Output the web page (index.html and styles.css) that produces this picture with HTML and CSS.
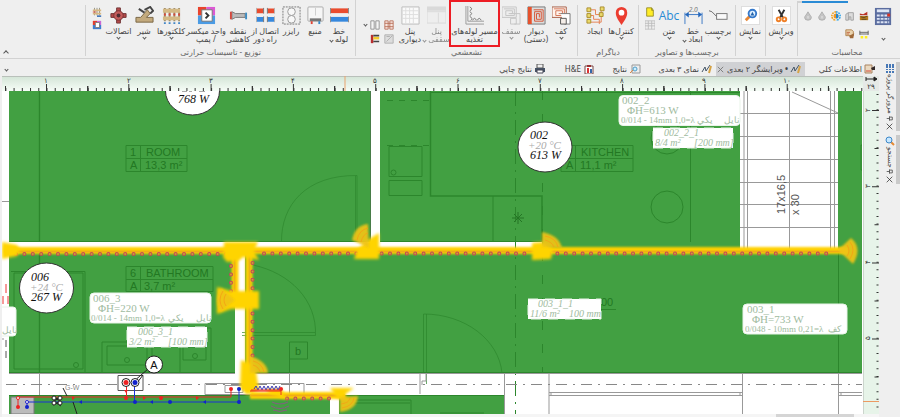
FILE: index.html
```html
<!DOCTYPE html>
<html lang="fa" dir="rtl">
<head>
<meta charset="utf-8">
<title>ویرایشگر ۲ بعدی</title>
<link rel="stylesheet" href="styles.css">
</head>
<body>
<header class="ribbon">
  <section class="group calc">
    <div class="tools">
      <button class="tool w18" aria-label="محاسبات"><svg class="icon" viewBox="0 0 20 20"><rect x="1" y="1" width="17" height="18" fill="#5b6d9f"/><path d="M3 4h13" stroke="#dfe6f5" stroke-width="3"/><path d="M3 9h13M3 12.500h13M3 16h13" stroke="#dbe2f4" stroke-width="2" stroke-dasharray="3 1"/><path d="M14 7h3v3h-3z" fill="#d32"/></svg><i class="caret"></i></button>
      <div class="mini calc-grid">
        <button aria-label="مواد"><svg viewBox="0 0 12 12"><path d="M1 3l4 1 5-3v4H1z" fill="#b93224"/><path d="M1 6h10v5H1z" fill="#b57b1f"/><path d="M2 7l4 1 4-2M3 10h6" stroke="#542" fill="none"/></svg></button>
        <button aria-label="ساختمان"><svg viewBox="0 0 12 12"><path d="M1 4l3-2v9H1zM4 2h6v9H7V7H5v4" fill="#ddd" stroke="#999"/></svg></button>
        <button aria-label="گرمایش"><svg viewBox="0 0 12 12"><path d="M6 1a5 5 0 0 0 0 10" fill="none" stroke="#f0a325" stroke-width="2" stroke-dasharray="2 1"/><path d="M6 1a5 5 0 0 1 0 10" fill="none" stroke="#35a7e8" stroke-width="2" stroke-dasharray="2 1"/><circle cx="6" cy="6" r="3" fill="#ef9821"/><path d="M6 3a3 3 0 0 1 0 6" fill="#2386d1"/></svg></button>
        <button aria-label="آب سرد"><svg viewBox="0 0 12 12"><path d="M6 1C4 5 2 6 2 8a4 3 0 0 0 8 0c0-2-2-3-4-7z" fill="#c4c4c4" stroke="#aaa"/><path d="M6 6v3" stroke="#eee"/></svg></button>
        <button aria-label="آب گرم"><svg viewBox="0 0 12 12"><path d="M6 1C4 5 2 6 2 8a4 3 0 0 0 8 0c0-2-2-3-4-7z" fill="#c4c4c4" stroke="#aaa"/><path d="M6 6v3" stroke="#eee"/></svg></button>
        <button aria-label="اندازه"><svg viewBox="0 0 12 12"><path d="M1 2v5M11 2v5M1 4h10M1 6h10" stroke="#555"/><path d="M2 10h3M7 10h3" stroke="#ffee20" stroke-width="3"/></svg></button>
        <button class="report" aria-label="گزارش"><svg viewBox="0 0 12 12"><path d="M1 1h7l2 2v5H1z" fill="#ead3ae" stroke="#a97841"/><path d="M2 4h4M2 6h3" stroke="#bb5936"/><path d="M5 8l6-3-1 6H6z" fill="#9e6938"/></svg></button>
      </div>
    </div>
    <h2>محاسبات</h2>
  </section>
  <section class="group w32"><div class="tools">
    <button class="tool w30"><svg class="icon" viewBox="0 0 20 20"><rect x=".5" y=".5" width="19" height="19" fill="#fff" stroke="#ddd"/><path d="M7 4l5 9M13 4l-5 9" stroke="#333" stroke-width="2"/><circle cx="7" cy="14" r="2" fill="none" stroke="#ef8028" stroke-width="2"/><circle cx="13" cy="14" r="2" fill="none" stroke="#ef8028" stroke-width="2"/></svg><span>ویرایش</span><i class="caret"></i></button></div></section>
  <section class="group w30"><div class="tools">
    <button class="tool w28"><svg class="icon" viewBox="0 0 20 20"><rect x=".5" y=".5" width="19" height="19" fill="#fff" stroke="#ddd"/><path d="M5 15l5-5" stroke="#e58635" stroke-width="3"/><circle cx="12" cy="8" r="4" fill="#dcefff" stroke="#3478ca" stroke-width="2"/><path d="M10 10l2-4 2 4z" fill="#2262aa"/></svg><span>نمایش</span><i class="caret"></i></button></div></section>
  <section class="group"><div class="tools">
    <button class="tool w26"><svg class="icon" viewBox="0 0 20 20"><path d="M0 5l3 1 5 5" fill="none" stroke="#666"/><rect x="8" y="8" width="11" height="6" fill="#f9f9f9" stroke="#777"/></svg><span>برچسب</span><i class="caret"></i></button>
    <button class="tool w24"><svg class="icon" viewBox="0 0 20 20"><path d="M1 7v12M19 7v12M2 9h16" stroke="#3b78c5"/><path d="M1 9l4-3v6zM19 9l-4-3v6z" fill="#2467bc"/><text x="5" y="6" font-size="7" font-style="italic" fill="#777">2.0</text></svg><span>خط<br>ابعاد <i class="caret"></i></span></button>
    <button class="tool w24"><b class="abc">Abc</b><span>متن</span><i class="caret"></i></button>
    <div class="mini stack"><button aria-label="یادداشت"><svg viewBox="0 0 12 12"><path d="M2 1h6l2 3v7H2z" fill="#ffec27" stroke="#8e8622"/><path d="M8 1v3h2" fill="none" stroke="#8e8622"/></svg></button><button aria-label="جدول"><svg viewBox="0 0 12 12"><path d="M0 1h12v10H0zM0 4h12M0 7h12M4 1v10M8 1v10" fill="#eee" stroke="#bbb"/></svg></button></div>
  </div><h2>برچسب‌ها و تصاویر</h2></section>
  <section class="group"><div class="tools">
    <button class="tool w26"><svg class="icon" viewBox="0 0 20 20"><path d="M10 20C6 14 4 11 4 7a6 6 0 0 1 12 0c0 4-2 7-6 13z" fill="#eb3d30"/><circle cx="10" cy="7" r="3" fill="#fff"/></svg><span>کنترل‌ها</span><i class="caret"></i></button>
    <button class="tool w26"><svg class="icon" viewBox="0 0 20 20"><path d="M5 4h5v5h7M5 10h3v4h6v5M5 17h11V5" fill="none" stroke="#e58152"/><path d="M1 2h4v4H1zM1 8h4v4H1zM1 14h4v4H1zM15 1h4v4h-4zM14 7h4v4h-4z" fill="#ead96a" stroke="#aa8d2b"/></svg><span>ایجاد</span></button>
  </div><h2>دیاگرام</h2></section>
  <section class="group"><div class="tools">
    <button class="tool w24"><svg class="icon" viewBox="0 0 20 20"><path d="M0 1h15v11H0z" fill="#fff5ef" stroke="#a75d45"/><path d="M2 3h11v7H4V5h7v3H7" fill="none" stroke="#d57555"/><path d="M9 8h10v11h-6" fill="#fff" stroke="#777"/><path d="M9 13h6v6H9z" fill="#f5eee8" stroke="#555"/></svg><span>کف</span><i class="caret"></i></button>
    <button class="tool w26"><svg class="icon" viewBox="0 0 20 20"><path d="M1 1h18v18H1z" fill="#ddd" stroke="#777"/><path d="M1 1h4v18H1z" fill="#e7522d"/><path d="M7 4h10v12H8V6h7v8h-5V8h3v4" fill="none" stroke="#d65334"/></svg><span>دیوار<br>(دستی)</span></button>
    <button class="tool off w24"><svg class="icon" viewBox="0 0 20 20"><path d="M0 1h15v11H0zM2 3h11v7H4V5h7v3H7M9 8h10v11h-6M9 13h6v6H9z" fill="#eee" stroke="#aaa"/></svg><span>سقف</span><i class="caret"></i></button>
    <button class="tool pick w49"><svg class="icon" viewBox="0 0 20 20"><path d="M1 0v19h19M3 0v16h17" fill="none" stroke="#999"/><path d="M5 1q4 2 0 4M5 6q4 2 0 4M5 11q4 2 1 4M8 15q2-4 4 0M13 15q2-4 4 0" fill="none" stroke="#777"/></svg><span>مسیر لوله‌های<br>تغذیه</span></button>
    <button class="tool off w27"><svg class="icon" viewBox="0 0 20 20"><path d="M0 1h20v17H0zM0 6h20M12 7v11" fill="#eee" stroke="#ccc"/><path d="M0 1h20v4H0z" fill="#ccc"/></svg><span>پنل<br>سقفی <i class="caret"></i></span></button>
    <button class="tool w26"><svg class="icon" viewBox="0 0 20 20"><path d="M1 1h18v18H1z" fill="#fafafa" stroke="#bbb"/><path d="M1 5h18M1 9h18M1 13h18M5 1v18M9 1v18M13 1v18" stroke="#ddd"/></svg><span>پنل<br>دیواری</span></button>
    <div class="mini quad"><button aria-label="پنل گرم"><svg viewBox="0 0 12 12"><path d="M1 1h4v10H1zM7 1h4v10H7zM1 4h10M1 8h10" fill="#f7e5de" stroke="#b66950"/></svg></button><button aria-label="پنل خالی"><svg viewBox="0 0 12 12"><path d="M1 1h4v10H1zM7 1h4v10H7z" fill="#f5f5f5" stroke="#888"/></svg></button><button aria-label="ویرایش پنل"><svg viewBox="0 0 12 12"><path d="M1 1h10v10H1zM3 9l7-7M3 3h4" fill="#ddd" stroke="#aaa"/></svg></button><button aria-label="لایه‌ها"><svg viewBox="0 0 12 12"><path d="M1 1h3v10H1z" fill="#b92e2e"/><path d="M4 2h7M4 9h7" stroke="#444" stroke-width="2"/><path d="M4 5h7" stroke="#f3cb2c" stroke-width="3"/></svg></button></div><i class="caret far"></i>
  </div><h2>تشعشعي</h2></section>
  <section class="group"><div class="tools">
    <button class="tool w24"><svg class="icon" viewBox="0 0 20 20"><path d="M1 5h18" stroke="#e94c2e" stroke-width="5"/><path d="M1 14h18" stroke="#3688dd" stroke-width="5"/><path d="M0 2v6M20 2v6M0 11v6M20 11v6" stroke="#888" stroke-width="2"/></svg><span>خط<br>لوله <i class="caret"></i></span></button>
    <button class="tool w24"><svg class="icon" viewBox="0 0 20 20"><rect x="2" y="1" width="16" height="15" rx="1" fill="#f6f6f6" stroke="#aaa"/><path d="M4 13h12v3H4z" fill="#777"/><path d="M10 2v8" stroke="#ccc"/><path d="M6 16v3" stroke="#df4333" stroke-width="2"/><path d="M14 16v3" stroke="#338ac8" stroke-width="2"/></svg><span>منبع</span></button>
    <button class="tool w24"><svg class="icon" viewBox="0 0 20 20"><path d="M1 1h18v18H1z" fill="none" stroke="#777" stroke-dasharray="2 1"/><circle cx="10" cy="6" r="4" fill="#f8f8f8" stroke="#999"/><circle cx="10" cy="14" r="4" fill="#f8f8f8" stroke="#999"/></svg><span>رایزر</span></button>
    <button class="tool w28"><svg class="icon" viewBox="0 0 20 20"><path d="M1 5h7M12 5h7" stroke="#e94c2e" stroke-width="5"/><path d="M1 14h7M12 14h7" stroke="#3688dd" stroke-width="5"/><path d="M0 2v6M8 2v6M12 2v6M20 2v6M0 11v6M8 11v6M12 11v6M20 11v6" stroke="#777"/></svg><span>اتصال از<br>راه دور</span></button>
    <button class="tool w26"><svg class="icon" viewBox="0 0 20 20"><path d="M3 6l4 2h10v4H7l-4 2z" fill="#bbb" stroke="#777"/><path d="M1 6h2v8H1z" fill="#d4493e"/><path d="M17 7h2v7h-2z" fill="#3e8cc1"/></svg><span>نقطه<br>کاهشی</span></button>
    <button class="tool w38"><svg class="icon" viewBox="0 0 20 20"><path d="M1 1h9v9H1z" fill="#e9432c"/><path d="M10 1h9v9h-9z" fill="#db5ad4"/><path d="M1 10h18v9H1z" fill="#4b9be4"/><path d="M5 4h11v12H5z" fill="#fff" stroke="#777"/><path d="M9 7l3 3-3 3" fill="none" stroke="#333" stroke-width="2"/></svg><span>واحد میکسر<br>/ پمپ</span></button>
    <button class="tool w32"><svg class="icon" viewBox="0 0 20 20"><path d="M3 2v14M8 2v14M13 2v14M18 2v14" stroke="#998866" stroke-width="2"/><path d="M1 5h18M1 13h18" stroke="#d4b985" stroke-width="4"/><path d="M2 9h17" stroke="#da4637" stroke-width="2" stroke-dasharray="2 3"/><path d="M2 18h17" stroke="#4386c6" stroke-width="2" stroke-dasharray="2 3"/></svg><span>کلکتورها</span><i class="caret"></i></button>
    <button class="tool w22"><svg class="icon" viewBox="0 0 20 20"><path d="M1 12h5l7-8 3 4-4 4h7v5H1z" fill="#c3aa7d" stroke="#796644"/><path d="M10 4l6-3 3 4-3 3M4 3l6 4" fill="none" stroke="#444" stroke-width="2"/></svg><span>شیر</span><i class="caret"></i></button>
    <button class="tool w29"><svg class="icon" viewBox="0 0 20 20"><path d="M8 2h4v16H8zM2 8h16v4H2z" fill="#b54848" stroke="#713738"/><circle cx="10" cy="10" r="5" fill="#c35b5b" stroke="#733"/><circle cx="10" cy="10" r="2" fill="#502c32"/></svg><span>اتصالات</span><i class="caret"></i></button>
    <div class="mini stack"><button aria-label="کلکتور"><svg viewBox="0 0 12 12"><path d="M3 1v9M6 1v9M9 1v9" stroke="#887"/><path d="M1 4h10M1 8h10" stroke="#d7b983" stroke-width="2"/><path d="M1 6h4" stroke="#d43"/><path d="M6 11h5" stroke="#47b" stroke-width="2"/></svg></button><button aria-label="میکسر"><svg viewBox="0 0 12 12"><path d="M1 1h5v5H1z" fill="#e43c2e"/><path d="M6 1h5v5H6z" fill="#c96ad4"/><path d="M1 6h10v5H1z" fill="#3e7cd0"/><path d="M4 3h5v6H4z" fill="#fff" stroke="#777"/></svg></button></div>
  </div><h2>توزیع - تاسیسات حرارتی</h2></section>
  <button class="collapse" aria-label="جمع کردن"><i class="caret up"></i></button>
</header>

<div class="work">
  <aside class="side">
    <button class="panel-tab"><svg viewBox="0 0 10 10"><path d="M2 1v9M5 1v9M8 1v9" stroke="#4778b6" stroke-width="2" stroke-dasharray="4 1 1 1"/></svg><span>مرورگر پروژه</span><svg class="pin" viewBox="0 0 10 10"><path d="M1 5h4M5 2v6M5 3h4v4H5" fill="none" stroke="#333"/></svg><svg class="x" viewBox="0 0 10 10"><path d="M1 1l8 8M9 1l-8 8" stroke="#222"/></svg></button>
    <button class="panel-tab"><svg viewBox="0 0 10 10"><path d="M6 6l3 3" stroke="#e48b35" stroke-width="2"/><circle cx="4" cy="4" r="3" fill="#c7e7ff" stroke="#3d87c8"/></svg><span>جستجو</span><svg class="pin" viewBox="0 0 10 10"><path d="M1 5h4M5 2v6M5 3h4v4H5" fill="none" stroke="#333"/></svg><svg class="x" viewBox="0 0 10 10"><path d="M1 1l8 8M9 1l-8 8" stroke="#222"/></svg></button>
  </aside>
  <main class="content">
    <nav class="tabs">
      <button class="t1"><svg viewBox="0 0 12 10"><path d="M1 1h7v8H1z" fill="#ead8bf" stroke="#a98361"/><path d="M7 4l4-2v4H8" fill="#342b2b"/><path d="M2 7h5" stroke="#d24b38"/></svg>اطلاعات کلي</button>
      <button class="active t2"><svg viewBox="0 0 12 10"><path d="M1 8l3-5 1 4 4-6" fill="none" stroke="#456"/><path d="M8 9l2-7" stroke="#d6a346" stroke-width="2"/></svg><b>•</b> ویرایشگر ۲ بعدی<svg class="close" viewBox="0 0 10 10"><path d="M2 2l6 6M8 2l-6 6" stroke="#777"/></svg></button>
      <button class="t3"><svg viewBox="0 0 12 10"><path d="M1 8l3-5 1 4 4-6" fill="none" stroke="#456"/><path d="M8 9l2-7" stroke="#d6a346" stroke-width="2"/></svg>نمای ۳ بعدی</button>
      <button class="t4"><svg viewBox="0 0 12 10"><path d="M3 1h8v8H3z" fill="#eee" stroke="#999"/><circle cx="6" cy="5" r="2" fill="#cdefff" stroke="#4e9cc7"/><path d="M1 9l3-3" stroke="#d84"/></svg>نتایج</button>
      <button class="t5"><svg viewBox="0 0 12 10"><path d="M2 2h8v8H2z" fill="#fff" stroke="#744"/><path d="M4 1h4v2H4z" fill="#933"/><path d="M5 4v5" stroke="#d33" stroke-width="2"/><path d="M8 5v4" stroke="#36a" stroke-width="2"/></svg>H&amp;E</button>
      <button class="t6"><svg viewBox="0 0 12 10"><path d="M3 0h6v4H3z" fill="#eee" stroke="#555"/><path d="M1 4h10v4H1z" fill="#465264"/><path d="M3 6h6v3H3z" fill="#fff" stroke="#445"/></svg>نتایج چاپي</button>
      <button class="more" aria-label="بیشتر"><i class="caret"></i></button>
    </nav>
    <div class="board">
      <svg class="ruler-top" viewBox="2 76 861 15">
        <defs><linearGradient id="rg" x2="0" y2="1"><stop stop-color="#d3e4d6"/><stop offset="1" stop-color="#f6fdf7"/></linearGradient></defs>
        <path d="M2 76h861v15H2z" fill="url(#rg)"/><path d="M2 76.500h861" stroke="#b9c0ba"/>
        <path d="M5.350 89.500H863" stroke="#333" stroke-width="3" stroke-dasharray="1 7.230"/>
        <path d="M5 88.500H863" stroke="#333" stroke-width="5" stroke-dasharray="1 81.300"/>
        <path d="M46 87.500H863" stroke="#333" stroke-width="7" stroke-dasharray="1 81.300"/>
        <path d="M87.200 88.500H863" stroke="#333" stroke-width="5" stroke-dasharray="1 81.300"/>
        <path d="M345 76v15" stroke="#e9a36f"/>
        <g class="num"><text x="46" y="83">۱</text><text x="129" y="83">۲</text><text x="211" y="83">۳</text><text x="293" y="83">۴</text><text x="375" y="83">۵</text><text x="458" y="83">۶</text><text x="540" y="83">۷</text><text x="622" y="83">۸</text><text x="704" y="83">۹</text><text x="787" y="83">۱۰</text></g>
      </svg>
      <svg class="corner" viewBox="0 0 16 15"><path d="M0 0h16v15H0z" fill="#e5e9e6"/><path d="M3 3h10" stroke="#222"/><path d="M3 1v4M11 1l3 2-3 2z" fill="#222" stroke="#222"/><text class="num" x="8" y="13">۲۹</text></svg>
      <svg class="plan" viewBox="2 91 861 323">
        <defs>
          <filter id="soft" x="-20%" y="-20%" width="140%" height="140%"><feGaussianBlur stdDeviation="1.600"/></filter>
          <filter id="soft2" filterUnits="userSpaceOnUse" x="0" y="80" width="880" height="340"><feGaussianBlur stdDeviation="1"/></filter>
        </defs>
        <path d="M2 91h861v323H2z" fill="#fff"/>
        <path d="M9 91H370V242H9zM380 91H740V252H542V242H380zM838 91H862V373H245V250H838zM9 252H235V373H9zM9 395H330V414H9zM339 395H504V414H339z" fill="#42a042"/>
        <g class="gl">
          <path d="M39.500 91V242M39.500 254V373" stroke-width="1.300"/><path d="M9 241.500H370M380 241.500H542M9 372.500H235M245 372.500H862M9 395.500H504"/>
          <path d="M370.500 91V242" stroke="#477c47"/>
          <path d="M126 145.500h61v26h-61zM126 158.500h61M140.500 145.500v26"/><path d="M561 145.500h72v26h-72zM561 158.500h72M575.500 145.500v26"/><path d="M126 266.500h87v25h-87zM126 279.500h87M140.500 266.500v25"/>
          <path d="M281.500 242C281 205 306 175 357 175.500V242M355.500 176V242" opacity=".65"/>
          <path d="M389 146.500h33v30h-33zM389 180.500h33v15h-33z"/><circle cx="393.500" cy="172.500" r="2.500"/><path d="M387 100.500h43M387 145.500h43" stroke-dasharray="6 6"/>
          <path d="M430.500 91V196H542V242" stroke-width="1.500"/><path d="M430 92.500H740M493 196V242"/>
          <path d="M515.500 91V414" stroke-dasharray="15 6 2 6"/><path d="M542.500 91V373" stroke-dasharray="9 14"/>
          <path d="M512 218h12M518 212v12M514 214l8 8M522 214l-8 8" stroke="#247524"/>
          <circle cx="667" cy="207" r="16"/><circle cx="667" cy="138" r="16"/><path d="M690.500 91V242M838.500 250V373M862 145h-1v25h1"/>
          <path d="M11 271.500h74V372M14 273v96h69v-96z"/><circle cx="76" cy="365" r="2.500"/>
          <path d="M102 372V342h50v30M107 346h40v19h-40zM180 372V328h31v44M183 347h23v13h-23z"/><circle cx="127" cy="360" r="2.500"/><circle cx="195" cy="356" r="2.500"/>
          <path d="M253 265C290 273 317 300 315.500 335.500H242M315 332.500H242M423.500 373V314C465 314 499 340 502 373M426.500 314v70" opacity=".7"/>
          <path d="M289.500 342h18v17h-18zM289.500 359v36"/><path d="M601 309.500h15M350 400h61v14M440 413h44M354 403h56"/>
        </g>
        <g class="gt"><text x="130" y="156">1</text><text x="146" y="156">ROOM</text><text x="130" y="169">A</text><text x="145" y="169">13,3 m²</text><text x="581" y="156">KITCHEN</text><text x="566" y="169">A</text><text x="580" y="169">11,1 m²</text><text x="130" y="277">6</text><text x="146" y="277">BATHROOM</text><text x="130" y="290">A</text><text x="144" y="290">3,7 m²</text><text x="601" y="306">00</text><text x="295" y="355">b</text></g>
        <path d="M740 91h98v158h-98z" fill="#fff"/>
        <g class="wl"><path d="M740 113.500h98M740 136.500h98M740 159.500h98M740 182.500h98M740 204.500h98M740 227.500h98M789.500 91v158M792 92l46 21M744 91v158M747.500 91v158M830.500 91v158M834.500 91v158"/>
        <path d="M245 373.500H862M9 373.500h226M504.500 373v41M549 373v41M742.500 373v41M838.500 373v41M549 392.500h193M549 395.500h193M838 392.500h24M838 395.500h24M39.500 373v22M551 392v3M740 392v3M841 392v3M289.500 373v22M420 373v21M426 373v8h-4v4"/>
        <path d="M2 201.500h7M2 339h2"/><path d="M6 384.500H862" stroke="#888" stroke-dasharray="11 6 2 6"/><path d="M205 383.500h99v11h-99zM225 385.500h18v7h-18z"/></g>
        <g class="stairs"><text transform="translate(785 214) rotate(-90)">17x16,5</text><text transform="translate(799 215) rotate(-90)">x 30</text></g>
        <path d="M6 284v9M3 296v8M8 296v8" stroke="#e33"/><path d="M6 340v20" stroke="#555" stroke-dasharray="7 4"/>

        <g filter="url(#soft2)" fill="none" stroke="#ffd000"><path d="M4 250.500H848M235 251V300M249 251V390M250 395.500H345" stroke-width="7"/></g>
        <g fill="none" stroke="#efae16"><path d="M4 251.500H848M234.500 255V292M249.500 255V390M250 395.500H345" stroke-width="2"/></g>
        <g class="dots"><path d="M16 254H235M264 253.500H532M549 253.500H834M231 266V292M252.500 263V358M287 398.500H335"/></g>
        <g class="pips"><path d="M16 254H235M264 253.500H532M549 253.500H834M231 266V292M252.500 263V358M287 398.500H335"/></g>
        <g filter="url(#soft)" fill="#ffd400"><path d="M2 242l15 3 3 5-3 6-15 3zM224 242h34l-4 9 5 9-16-3-3 3-13 2-4-5zM354 259l3-9 12-11 10-6v26zM532 260v-17l10-1 11 6-2 11zM231 291h28v18h-28l-14 5v-27zM241 360l14 5 4 25-12 5-7-7zM330 388h24l-10 7 6 6-13-3zM265 389h17l4 10-16-5z"/></g>
        <g filter="url(#soft2)" fill="#efc414" opacity=".93"><path d="M369 248L352 240Q355 225 368 224zM542 247V232Q559 235 562 248zM838 250L851 238Q863 248 853 264zM235 300L221 288Q213 301 221 312zM250 373V356Q267 361 268 373zM340 397L358 396Q357 410 340 412z"/></g>
        <g fill="none" stroke="#f5a015" opacity=".8"><path d="M357 240q2-10 11-12M361 242q2-8 7-9M545 236q11 2 13 11M545 240q7 2 9 7M850 242q6 7 0 17M847 245q4 6 0 11M223 291q-6 9 0 18M226 294q-4 6 0 12M253 361q9 2 11 11M253 365q6 2 7 7M354 398q-1 8-12 10M350 398q-1 5-9 6"/></g>

        <g class="bubble"><ellipse cx="192.500" cy="91" rx="27" ry="24"/><ellipse cx="545" cy="147" rx="27" ry="25"/><ellipse cx="46.500" cy="288" rx="27" ry="25"/></g>
        <g class="bt"><text x="178" y="103">768 W</text><text x="530" y="139">002</text><text x="530" y="159">613 W</text><text x="31" y="281">006</text><text x="31" y="301">267 W</text></g>
        <g class="bt pale"><text x="528" y="149">+20 °C</text><text x="30" y="291">+24 °C</text></g>
        <path d="M182 91.500h5M189 91.500h3M199 91.500h6" stroke="#aaa"/>
        <g class="tag"><rect x="619" y="95.500" width="121" height="30" rx="4"/><rect x="90" y="293" width="121" height="30" rx="4"/><rect x="743" y="304" width="104" height="30" rx="4"/><rect x="-9" y="307" width="25" height="29" rx="3"/><path d="M653 128h80v20h-80zM127 327h80v20h-80zM528 299h73v20h-73z" stroke-dasharray="10 7"/></g>
        <g class="tt"><text x="622" y="104">002_2</text><text x="627" y="114">ΦH=613 W</text><text x="93" y="302">006_3</text><text x="98" y="312">ΦH=220 W</text><text x="747" y="313">003_1</text><text x="752" y="323">ΦH=733 W</text></g>
        <g class="tt small"><text x="621" y="123">0/014 - 14mm 1,0=λ</text><text x="697" y="123">یکي</text><text x="724" y="123">نایل</text><text x="91" y="321">0/014 - 14mm 1,0=λ</text><text x="168" y="321">یکي</text><text x="196" y="321">نایل</text><text x="745" y="332">0/048 - 10mm 0,21=λ</text><text x="828" y="332">کف</text><text x="2" y="333">نایل</text></g>
        <g class="tt it"><text x="664" y="136">002_2_1</text><text x="655" y="146">8/4 m²</text><text x="694" y="146">[200 mm]</text><text x="138" y="335">006_3_1</text><text x="129" y="345">3/2 m²</text><text x="168" y="345">[100 mm]</text><text x="538" y="307">003_1_1</text><text x="530" y="317">11/6 m²</text><text x="569" y="317">100 mm</text></g>

        <path d="M11 397h23v17H11z" fill="#bbb" stroke="#777"/>
        <path d="M118 375.500h25v15h-25z" fill="#fff" stroke="#555"/><path d="M133 382l15-13M137 383l6-8" stroke="#222"/><circle cx="154" cy="364.500" r="8.500" fill="#fff" stroke="#222"/><text class="ref" x="154" y="369">A</text>
        <g fill="none" stroke="#ed2222"><path d="M18 407v-10H231V389M126.500 382v16M250 391h31"/></g><g fill="none" stroke="#1b32d5"><path d="M27 407v-5H239V389M134.500 382v20"/></g>
        <circle cx="126" cy="382.500" r="4" fill="#fff" stroke="#222"/><circle cx="135" cy="382.500" r="4" fill="#fff" stroke="#222"/>
        <g fill="#e22"><circle cx="126" cy="382.500" r="2.500"/><circle cx="18" cy="407" r="2"/><circle cx="126" cy="398" r="2"/><circle cx="161" cy="398" r="2"/><circle cx="231" cy="389" r="2"/><circle cx="281" cy="389" r="2"/><path d="M72 396l3 2-3 2zM143 396l3 2-3 2zM196 396l3 2-3 2zM124 390h4l-2 3z"/></g>
        <g fill="#12c"><circle cx="135" cy="382.500" r="2.500"/><circle cx="27" cy="407" r="2"/><circle cx="135" cy="402" r="2"/><circle cx="170" cy="402" r="2"/><circle cx="239" cy="389" r="2"/><circle cx="239" cy="402" r="2"/><path d="M82 400l-3 2 3 2zM153 400l-3 2 3 2zM206 400l-3 2 3 2z"/></g>
        <path d="M254 389l2-3 2 4 2-4 2 4 2-4 2 4 2-4 2 4 2-4 2 4 2-4 2 4 2-4" fill="none" stroke="#3939bd"/><path d="M251 390h30v5" fill="none" stroke="#e32" stroke-width="1"/>
        <path d="M53 396l8 6M53 402l8-6M53 401l8 5M53 405l8-4M63 388l4 8M73 402l4 12" stroke="#222"/><g fill="#fff" stroke="#222"><circle cx="54" cy="398" r="2"/><circle cx="60" cy="398" r="2"/><circle cx="54" cy="403" r="2"/><circle cx="60" cy="403" r="2"/><circle cx="18" cy="398" r="1.500" stroke="#e22"/><circle cx="27" cy="402" r="1.500" stroke="#22c"/></g><text class="gw" x="65" y="390">G-W</text>
        <path d="M272 402q8 4 16 0M271 406q9 5 18 0M273 410q7 3 14 0" fill="none" stroke="#865c82"/>
      </svg>
      <svg class="ruler-side" viewBox="863 91 16 323" preserveAspectRatio="none">
        <path d="M863 91h16v323h-16z" fill="#e7f4e9"/><path d="M863.500 91v323" stroke="#ccd5cd"/><path d="M877.500 94V414" stroke="#333" stroke-width="2" stroke-dasharray="1 6.620"/><path d="M876.500 148V414" stroke="#333" stroke-width="4" stroke-dasharray="1 75.200"/><path d="M875.500 110V414" stroke="#333" stroke-width="7" stroke-dasharray="1 75.200"/><path d="M863 401.500h16" stroke="#ec9a62"/>
        <g class="num"><text transform="translate(870 110) rotate(-90)">۲</text><text transform="translate(870 186) rotate(-90)">۳</text><text transform="translate(870 262) rotate(-90)">۴</text><text transform="translate(870 338) rotate(-90)">۵</text></g>
      </svg>
    </div>
    <div class="scroll"><span></span></div>
  </main>
</div>
</body>
</html>
```
FILE: styles.css
```css
* { box-sizing: border-box; }
body {
  margin: 0;
  min-height: 100vh;
  display: flex;
  flex-direction: column;
  background: #efefef;
  color: #444;
  font: 8px/8px "Segoe UI", "Noto Sans", "DejaVu Sans", sans-serif;
  overflow-x: hidden;
}
button { border: 0; padding: 0; margin: 0; background: none; color: inherit; font: inherit; }
svg { display: block; direction: ltr; }
i.caret {
  display: inline-block;
  width: 3px;
  height: 3px;
  border: solid #555;
  border-width: 0 1px 1px 0;
  transform: rotate(45deg);
}
i.up { width: 4px; height: 4px; transform: rotate(225deg); }

.ribbon { display: flex; height: 59px; border-bottom: 1px solid #d2d2d2; overflow: hidden; }
.group {
  flex: none;
  display: flex;
  flex-direction: column;
  justify-content: space-between;
  padding: 0 4px;
  margin: 5px 0 2px;
  border-left: 1px solid #d2d2d2;
}
.group.w32, .group.w30 { padding-inline: 1px; }
.group h2 { margin: 0; font: inherit; text-align: center; color: #666; white-space: nowrap; }
.tools { display: flex; align-items: flex-start; }
.tool { flex: none; display: flex; flex-direction: column; align-items: center; padding-top: 1px; white-space: nowrap; height: 40px; }
.tool span { padding-top: 2px; text-align: center; }
.tool > .caret { margin-top: 1px; }
.icon { width: 19px; height: 19px; }
.off { opacity: .6; }
.pick { outline: 2px solid #ed1c24; outline-offset: -1px; margin-top: -4px; padding-top: 5px; height: 45px; }
.ribbon .group:has(.pick) { margin-top: 0; padding-top: 5px; }
.abc { font: 12px/19px "Open Sans", sans-serif; color: #2a8bd5; }
.w18 { width: 18px; }
.w22 { width: 22px; }
.w24 { width: 24px; }
.w26 { width: 26px; }
.w27 { width: 27px; }
.w28 { width: 28px; }
.w29 { width: 29px; }
.w30 { width: 30px; }
.w32 { width: 32px; }
.w38 { width: 38px; }
.w49 { width: 49px; }
.mini { display: grid; gap: 3px; justify-items: center; }
.mini svg { width: 10px; height: 10px; }
.stack { width: 14px; padding-top: 2px; }
.quad { grid-template-columns: 10px 10px; gap: 4px; width: 30px; padding-top: 15px; justify-content: center; }
.far { margin: 18px 0 0 4px; }
.calc { width: 103px; padding-right: 8px; border-top: 2px solid #2a8bd5; margin-top: 1px; padding-top: 3px; border-image: linear-gradient(to left, #efefef 52px, #2a8bd5 52px, #2a8bd5 98px, #d2d2d2 98px) 2 0 0 1; }
.calc .tool > .caret { margin-top: 11px; }
.calc-grid { grid-template-columns: repeat(5, 14px); gap: 8px 0; padding: 5px 3px 0 0; }
.calc .tools { margin-left: -4px; }
.collapse { margin: auto auto 2px 4px; }
.tools > .caret { flex: none; }

.work { flex: 1; display: flex; }
.side { width: 21px; padding-top: 3px; display: flex; flex-direction: column; gap: 4px; }
.panel-tab {
  writing-mode: vertical-rl;
  display: flex;
  align-items: center;
  gap: 1px;
  width: 20px;
  padding: 1px 1px 1px 4px;
  border-right: 4px solid #cacaca;
  white-space: nowrap;
  direction: ltr;
  font-size: 7px;
}
.panel-tab svg { width: 10px; height: 10px; flex: none; }
.panel-tab .pin, .panel-tab .x { width: 7px; height: 7px; }
.content { flex: 1; min-width: 0; padding-left: 2px; }
.tabs { display: flex; height: 14px; margin-top: 3px; }
.tabs button { flex: none; display: flex; align-items: center; gap: 2px; padding: 0 3px; white-space: nowrap; }
.tabs svg { width: 12px; height: 10px; flex: none; }
.tabs .close { width: 9px; height: 9px; margin-right: auto; }
.tabs .active { background: #d0d1d4; }
.t1 { width: 74px; }
.t2 { width: 89px; }
.t3 { width: 72px; }
.t4 { width: 46px; }
.t5 { width: 49px; }
.t6 { width: 60px; }
.tabs .more { margin-right: auto; }
.board { direction: ltr; display: grid; grid-template-columns: minmax(0, 1fr) 16px; }
.board svg { width: 100%; }
.board .corner, .board .ruler-side { height: 100%; }
.num { font: 7px "DejaVu Sans", sans-serif; fill: #333; text-anchor: middle; }
.gl { fill: none; stroke: #2c862c; stroke-width: 1; }
.gt { font: 11px "Liberation Sans", sans-serif; fill: #237823; }
.wl { fill: none; stroke: #999; }
.stairs { font: 11px "Liberation Sans", sans-serif; fill: #555; }
.dots, .pips { fill: none; stroke-linecap: round; stroke: #c8455a; stroke-width: 4; stroke-dasharray: 0 8.4; }
.pips { stroke: #c8a82c; stroke-width: 2; }
.bubble { fill: #fff; stroke: #333; }
.bt { font: italic 12px "Liberation Serif", serif; fill: #111; }
.bt.pale { font-size: 11px; fill: #aaa; }
.tag { fill: #fff; stroke: #e9f4e9; }
.tt { font: 11px "Liberation Serif", serif; fill: #a0bba0; }
.tt.small { font-size: 9px; }
.tt.it { font-size: 10px; font-style: italic; }
.ref { font: 11px "Liberation Sans", sans-serif; text-anchor: middle; fill: #111; }
.gw { font: 7px "Liberation Sans", sans-serif; fill: #888; }
.scroll { height: 3px; background: #f5f5f5; display: flex; padding-right: 25px; }
.scroll span { width: 78px; background: #d5d5d5; }
```
